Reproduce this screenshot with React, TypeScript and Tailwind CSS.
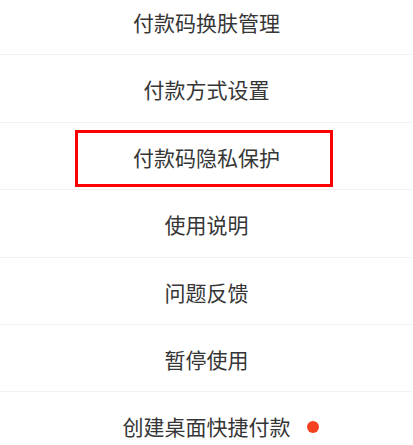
import React from 'react';

const items = [
  { label: '付款码换肤管理' },
  { label: '付款方式设置' },
  { label: '付款码隐私保护', highlight: true },
  { label: '使用说明' },
  { label: '问题反馈' },
  { label: '暂停使用' },
  { label: '创建桌面快捷付款', dot: true },
];

const App = () => {
  return (
    <div
      className="h-[445px] w-full overflow-hidden bg-white"
      style={{ fontFamily: '"Noto Sans CJK SC", "Noto Sans", sans-serif' }}
    >
      <ul className="-mt-[12px]">
        {items.map((item) => (
          <li
            key={item.label}
            className="relative flex h-[67.4px] items-center justify-center border-b border-[#f3f3f3] pt-[3px] text-[21px] text-[#363636]"
          >
            <span className="relative">
              {item.label}
              {item.dot && (
                <span className="absolute left-[calc(100%+16px)] top-1/2 h-[12px] w-[12px] -translate-y-1/2 rounded-full bg-[#f5411f]" />
              )}
            </span>
            {item.highlight && (
              <div className="pointer-events-none absolute left-[75px] top-[7px] h-[57px] w-[258px] border-[3px] border-[#ff0000]" />
            )}
          </li>
        ))}
      </ul>
    </div>
  );
};

export default App;
